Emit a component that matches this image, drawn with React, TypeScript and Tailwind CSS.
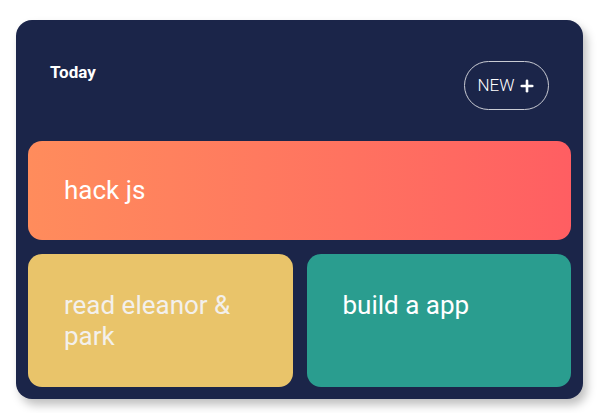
import { Plus } from 'lucide-react';

const tasks = [
  { title: 'read eleanor & park', bg: 'bg-[#e9c46a]', text: 'text-[#f3f0ec]' },
  { title: 'build a app', bg: 'bg-[#2a9d8f]', text: 'text-white' },
];

export default function App() {
  return (
    <div className="min-h-screen bg-white pt-5 pl-4 pr-[15px] font-['Roboto',sans-serif]">
      <div className="w-[567px] rounded-[16px] bg-[#1b2549] px-3 pb-3 shadow-[4px_6px_10px_rgba(0,0,0,0.25)]">
        {/* header */}
        <div className="flex items-start justify-between h-[121px] pl-[22px] pr-[22px] pt-[41px]">
          <h2 className="text-[17px] font-bold text-white leading-[22px]">Today</h2>
          <button className="flex items-center gap-[3px] h-[49px] w-[85px] justify-center rounded-full border border-[#c9cbd3] text-white text-[17px] font-light">
            NEW
            <Plus className="w-[18px] h-[18px]" strokeWidth={3.5} />
          </button>
        </div>

        {/* main task */}
        <div className="flex items-center h-[99px] rounded-[14px] px-9 bg-gradient-to-r from-[#ff8c5c] to-[#ff5e62]">
          <span className="text-[26px] text-white">hack js</span>
        </div>

        {/* smaller tasks */}
        <div className="grid grid-cols-2 gap-[14px] mt-[14px]">
          {tasks.map((t) => (
            <div key={t.title} className={`h-[133px] rounded-[14px] pl-9 pr-6 pt-9 ${t.bg}`}>
              <span className={`text-[26px] leading-[31px] ${t.text}`}>{t.title}</span>
            </div>
          ))}
        </div>
      </div>
    </div>
  );
}
